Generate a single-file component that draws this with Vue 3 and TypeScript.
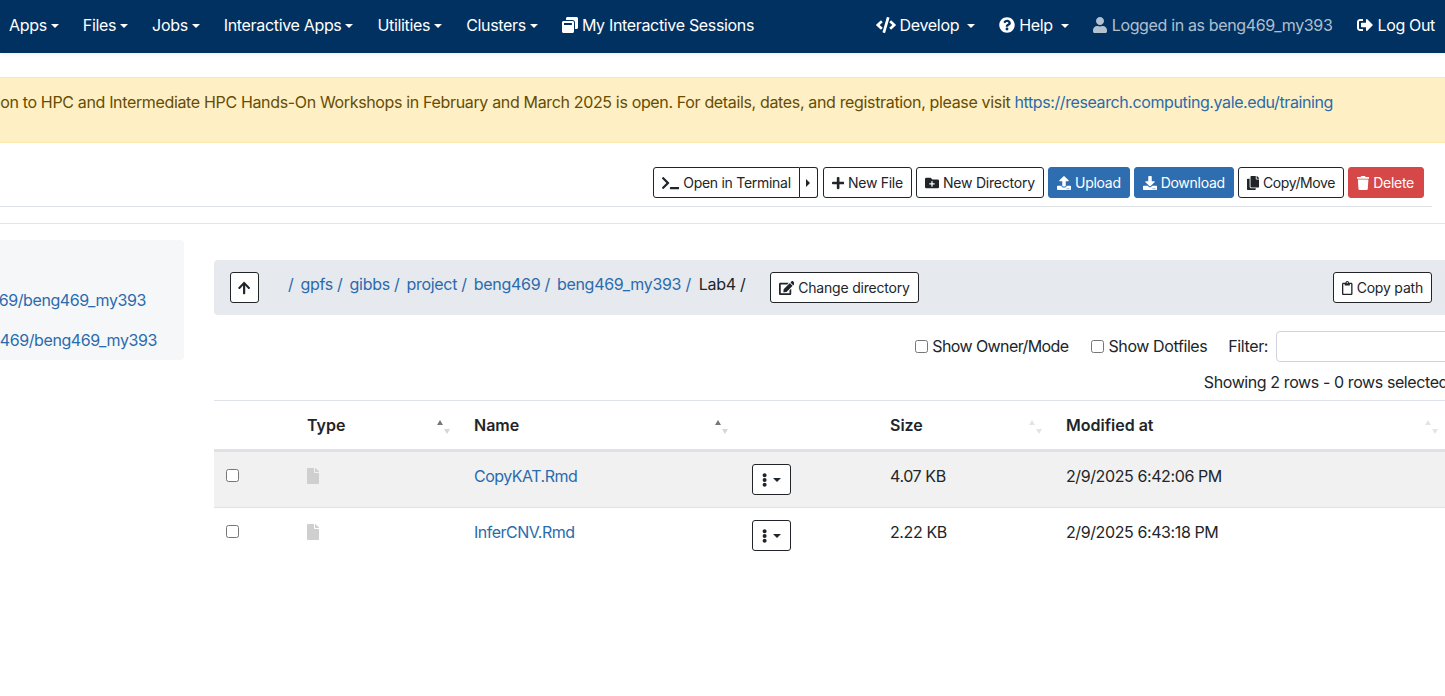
<script setup lang="ts">
import { h } from 'vue'

// font awesome 5 solid paths: [viewBox width, d]
const icons: Record<string, [number, string]> = {
  file: [384, 'M224 136V0H24C10.7 0 0 10.7 0 24v464c0 13.3 10.7 24 24 24h336c13.3 0 24-10.7 24-24V160H248c-13.2 0-24-10.8-24-24zm160-14.1v6.1H256V0h6.1c6.4 0 12.5 2.5 17 7l97.9 98c4.5 4.5 7 10.6 7 16.9z'],
  up: [448, 'M34.9 289.5l-22.2-22.2c-9.4-9.4-9.4-24.6 0-33.9L207 39c9.4-9.4 24.6-9.4 33.9 0l194.3 194.3c9.4 9.4 9.4 24.6 0 33.9L413 289.4c-9.5 9.5-25 9.3-34.3-.4L264 168.6V456c0 13.3-10.7 24-24 24h-32c-13.3 0-24-10.7-24-24V168.6L69.2 289.1c-9.3 9.8-24.8 10-34.3.4z'],
  plus: [448, 'M416 208H272V64c0-17.67-14.33-32-32-32h-32c-17.67 0-32 14.33-32 32v144H32c-17.67 0-32 14.33-32 32v32c0 17.67 14.33 32 32 32h144v144c0 17.67 14.33 32 32 32h32c17.67 0 32-14.33 32-32V304h144c17.67 0 32-14.33 32-32v-32c0-17.67-14.33-32-32-32z'],
  terminal: [640, 'M257.981 272.971L63.638 467.314c-9.373 9.373-24.569 9.373-33.941 0L7.029 444.647c-9.357-9.357-9.375-24.522-.04-33.901L161.011 256 6.99 101.255c-9.335-9.379-9.317-24.544.04-33.901l22.667-22.667c9.373-9.373 24.569-9.373 33.941 0L257.981 239.03c9.373 9.372 9.373 24.568 0 33.941zM640 456v-32c0-13.255-10.745-24-24-24H312c-13.255 0-24 10.745-24 24v32c0 13.255 10.745 24 24 24h304c13.255 0 24-10.745 24-24z'],
  folderPlus: [512, 'M464,128H272L208,64H48A48,48,0,0,0,0,112V400a48,48,0,0,0,48,48H464a48,48,0,0,0,48-48V176A48,48,0,0,0,464,128ZM359.5,296a16,16,0,0,1-16,16h-64v64a16,16,0,0,1-16,16h-16a16,16,0,0,1-16-16V312h-64a16,16,0,0,1-16-16V280a16,16,0,0,1,16-16h64V200a16,16,0,0,1,16-16h16a16,16,0,0,1,16,16v64h64a16,16,0,0,1,16,16Z'],
  upload: [512, 'M296 384h-80c-13.3 0-24-10.7-24-24V192h-87.7c-17.8 0-26.7-21.5-14.1-34.1L242.3 5.7c7.5-7.5 19.8-7.5 27.3 0l152.2 152.2c12.6 12.6 3.7 34.1-14.1 34.1H320v168c0 13.3-10.7 24-24 24zm216-8v112c0 13.3-10.7 24-24 24H24c-13.3 0-24-10.7-24-24V376c0-13.3 10.7-24 24-24h136v8c0 30.9 25.1 56 56 56h80c30.9 0 56-25.1 56-56v-8h136c13.3 0 24 10.7 24 24zm-124 88c0-11-9-20-20-20s-20 9-20 20 9 20 20 20 20-9 20-20zm64 0c0-11-9-20-20-20s-20 9-20 20 9 20 20 20 20-9 20-20z'],
  download: [512, 'M216 0h80c13.3 0 24 10.7 24 24v168h87.7c17.8 0 26.7 21.5 14.1 34.1L269.7 378.3c-7.5 7.5-19.8 7.5-27.3 0L90.1 226.1c-12.6-12.6-3.7-34.1 14.1-34.1H192V24c0-13.3 10.7-24 24-24zm296 376v112c0 13.3-10.7 24-24 24H24c-13.3 0-24-10.7-24-24V376c0-13.3 10.7-24 24-24h146.7l49 49c20.1 20.1 52.5 20.1 72.6 0l49-49H488c13.3 0 24 10.7 24 24zm-124 88c0-11-9-20-20-20s-20 9-20 20 9 20 20 20 20-9 20-20zm64 0c0-11-9-20-20-20s-20 9-20 20 9 20 20 20 20-9 20-20z'],
  copy: [448, 'M320 448v40c0 13.255-10.745 24-24 24H24c-13.255 0-24-10.745-24-24V120c0-13.255 10.745-24 24-24h72v296c0 30.879 25.121 56 56 56h168zm0-344V0H152c-13.255 0-24 10.745-24 24v368c0 13.255 10.745 24 24 24h272c13.255 0 24-10.745 24-24V128H344c-13.2 0-24-10.8-24-24zm120.971-31.029L375.029 7.029A24 24 0 0 0 358.059 0H352v96h96v-6.059a24 24 0 0 0-7.029-16.97z'],
  trash: [448, 'M432 32H312l-9.4-18.7A24 24 0 0 0 281.1 0H166.8a23.72 23.72 0 0 0-21.4 13.3L136 32H16A16 16 0 0 0 0 48v32a16 16 0 0 0 16 16h416a16 16 0 0 0 16-16V48a16 16 0 0 0-16-16zM53.2 467a48 48 0 0 0 47.9 45h245.8a48 48 0 0 0 47.9-45L416 128H32z'],
  edit: [576, 'M402.6 83.2l90.2 90.2c3.8 3.8 3.8 10 0 13.8L274.4 405.6l-92.8 10.3c-12.4 1.4-22.9-9.1-21.5-21.5l10.3-92.8L388.8 83.2c3.8-3.8 10-3.8 13.8 0zm162-22.9l-48.8-48.8c-15.2-15.2-39.9-15.2-55.2 0l-35.4 35.4c-3.8 3.8-3.8 10 0 13.8l90.2 90.2c3.8 3.8 10 3.8 13.8 0l35.4-35.4c15.2-15.3 15.2-40 0-55.2zM384 346.2V448H64V128h229.8c3.2 0 6.2-1.3 8.5-3.5l40-40c7.6-7.6 2.2-20.5-8.5-20.5H48C21.5 64 0 85.5 0 112v352c0 26.5 21.5 48 48 48h352c26.5 0 48-21.5 48-48V306.2c0-10.7-12.9-16-20.5-8.5l-40 40c-2.2 2.3-3.5 5.3-3.5 8.5z'],
  clipboard: [384, 'M336 64h-80c0-35.3-28.7-64-64-64s-64 28.7-64 64H48C21.5 64 0 85.5 0 112v352c0 26.5 21.5 48 48 48h288c26.5 0 48-21.5 48-48V112c0-26.5-21.5-48-48-48zM192 40c13.3 0 24 10.7 24 24s-10.7 24-24 24-24-10.7-24-24 10.7-24 24-24zm144 418c0 3.3-2.7 6-6 6H54c-3.3 0-6-2.7-6-6V118c0-3.3 2.7-6 6-6h42v36c0 6.6 5.4 12 12 12h168c6.6 0 12-5.4 12-12v-36h42c3.3 0 6 2.7 6 6z'],
  dots: [192, 'M96 184c39.8 0 72 32.2 72 72s-32.2 72-72 72-72-32.2-72-72 32.2-72 72-72zM24 80c0 39.8 32.2 72 72 72s72-32.2 72-72S135.8 8 96 8 24 40.2 24 80zm0 352c0 39.8 32.2 72 72 72s72-32.2 72-72-32.2-72-72-72-72 32.2-72 72z'],
  code: [640, 'M278.9 511.5l-61-17.7c-6.4-1.8-10-8.5-8.2-14.9L346.2 8.7c1.8-6.4 8.5-10 14.9-8.2l61 17.7c6.4 1.8 10 8.5 8.2 14.9L293.8 503.3c-1.9 6.4-8.5 10.1-14.9 8.2zm-114-112.2l43.5-46.4c4.6-4.9 4.3-12.7-.8-17.2L117 256l90.6-79.7c5.1-4.5 5.5-12.3.8-17.2l-43.5-46.4c-4.5-4.8-12.1-5.1-17-.5L3.8 247.2c-5.1 4.7-5.1 12.8 0 17.5l144.1 135.1c4.9 4.6 12.5 4.4 17-.5zm327.2.6l144.1-135.1c5.1-4.7 5.1-12.8 0-17.5L492.1 112.1c-4.8-4.5-12.4-4.3-17 .5L431.6 159c-4.6 4.9-4.3 12.7.8 17.2L523 256l-90.6 79.7c-5.1 4.5-5.5 12.3-.8 17.2l43.5 46.4c4.5 4.9 12.1 5.1 17 .6z'],
  help: [512, 'M504 256c0 136.997-111.043 248-248 248S8 392.997 8 256C8 119.083 119.043 8 256 8s248 111.083 248 248zM262.655 90c-54.497 0-89.255 22.957-116.549 63.758-3.536 5.286-2.353 12.415 2.715 16.258l34.699 26.31c5.205 3.947 12.621 3.008 16.665-2.122 17.864-22.658 30.113-35.797 57.303-35.797 20.429 0 45.698 13.148 45.698 32.958 0 14.976-12.363 22.667-32.534 33.976C247.128 238.528 216 254.941 216 296v4c0 6.627 5.373 12 12 12h56c6.627 0 12-5.373 12-12v-1.333c0-28.462 83.186-29.647 83.186-106.667 0-58.002-60.165-102-116.531-102zM256 338c-25.365 0-46 20.635-46 46 0 25.364 20.635 46 46 46s46-20.636 46-46c0-25.365-20.635-46-46-46z'],
  user: [448, 'M224 256c70.7 0 128-57.3 128-128S294.7 0 224 0 96 57.3 96 128s57.3 128 128 128zm89.6 32h-16.7c-22.2 10.2-46.9 16-72.9 16s-50.6-5.8-72.9-16h-16.7C60.2 288 0 348.2 0 422.4V464c0 26.5 21.5 48 48 48h352c26.5 0 48-21.5 48-48v-41.6c0-74.2-60.2-134.4-134.4-134.4z'],
  logout: [512, 'M497 273L329 441c-15 15-41 4.5-41-17v-96H152c-13.3 0-24-10.7-24-24v-96c0-13.3 10.7-24 24-24h136V88c0-21.4 25.9-32 41-17l168 168c9.3 9.4 9.3 24.6 0 34zM192 436v-40c0-6.6-5.4-12-12-12H96c-17.7 0-32-14.3-32-32V160c0-17.7 14.3-32 32-32h84c6.6 0 12-5.4 12-12V76c0-6.6-5.4-12-12-12H96c-53 0-96 43-96 96v192c0 53 43 96 96 96h84c6.6 0 12-5.4 12-12z'],
  sessions: [512, 'M512 48v288c0 26.5-21.5 48-48 48h-48V176c0-44.1-35.9-80-80-80H128V48c0-26.5 21.5-48 48-48h288c26.5 0 48 21.5 48 48zM384 176v288c0 26.5-21.5 48-48 48H48c-26.5 0-48-21.5-48-48V176c0-26.5 21.5-48 48-48h288c26.5 0 48 21.5 48 48zm-68 28c0-6.6-5.4-12-12-12H76c-6.6 0-12 5.4-12 12v52h252v-52z'],
}

const Fa = (props: { n: string }) =>
  h('svg', { viewBox: `0 0 ${icons[props.n][0]} 512`, class: 'fa', fill: 'currentColor' }, [
    h('path', { d: icons[props.n][1] }),
  ])
Fa.props = ['n']

const navItems = ['Apps', 'Files', 'Jobs', 'Interactive Apps', 'Utilities', 'Clusters']
const crumbs = ['gpfs', 'gibbs', 'project', 'beng469', 'beng469_my393']
const actions = [
  { label: 'New File', icon: 'plus', kind: 'outline' },
  { label: 'New Directory', icon: 'folderPlus', kind: 'outline loose' },
  { label: 'Upload', icon: 'upload', kind: 'blue' },
  { label: 'Download', icon: 'download', kind: 'blue' },
  { label: 'Copy/Move', icon: 'copy', kind: 'outline narrow' },
  { label: 'Delete', icon: 'trash', kind: 'red' },
]
const columns = ['', 'Type', 'Name', '', 'Size', 'Modified at']
const rows = [
  { name: 'CopyKAT.Rmd', size: '4.07 KB', date: '2/9/2025 6:42:06 PM' },
  { name: 'InferCNV.Rmd', size: '2.22 KB', date: '2/9/2025 6:43:18 PM' },
]
</script>

<template>
  <div class="page">
    <nav class="navbar">
      <a v-for="item in navItems" :key="item" class="nav-link">{{ item }}<i class="caret" /></a>
      <a class="nav-link"><Fa n="sessions" class="ico-nav" />My Interactive Sessions</a>
      <div class="nav-right">
        <a class="nav-link"><Fa n="code" class="ico-nav" />Develop<i class="caret wide" /></a>
        <a class="nav-link"><Fa n="help" class="ico-nav" />Help<i class="caret wide" /></a>
        <span class="nav-link muted"><Fa n="user" class="ico-nav ico-user" />Logged in as beng469_my393</span>
        <a class="nav-link"><Fa n="logout" class="ico-nav" />Log Out</a>
      </div>
    </nav>

    <div class="alert">
      <p>Registration for the Introduction to HPC and Intermediate HPC Hands-On Workshops in February and March 2025 is open. For details, dates, and registration, please visit <a>https://research.computing.yale.edu/training</a></p>
    </div>

    <div class="toolbar">
      <div class="split">
        <button class="btn split-main"><Fa n="terminal" class="ico-btn" />Open in Terminal</button>
        <button class="btn split-caret"><i class="caret-right" /></button>
      </div>
      <button v-for="a in actions" :key="a.label" class="btn" :class="a.kind">
        <Fa :n="a.icon" class="ico-btn" />{{ a.label }}
      </button>
    </div>
    <div class="rule-top" />
    <div class="rule-bottom" />

    <div class="content">
      <aside class="sidebar">
        <div class="fav-row" />
        <a class="fav-row">/gpfs/gibbs/project/beng469/beng469_my393</a>
        <a class="fav-row second">/vast/palmer/scratch/beng469/beng469_my393</a>
      </aside>

      <main class="main">
        <div class="crumbbar">
          <button class="btn up"><Fa n="up" class="ico-up" /></button>
          <ol class="crumbs">
            <li><a>/</a></li>
            <li v-for="c in crumbs" :key="c"><a>{{ c }}</a> <a>/</a></li>
            <li class="current">Lab4 /</li>
          </ol>
          <button class="btn change"><Fa n="edit" class="ico-btn" />Change directory</button>
          <button class="btn copy-path"><Fa n="clipboard" class="ico-btn" />Copy path</button>
        </div>

        <div class="filters">
          <label class="tight"><input type="checkbox" />Show Owner/Mode</label>
          <label><input type="checkbox" />Show Dotfiles</label>
          <label class="filter-label">Filter:<input type="text" class="filter-input" /></label>
        </div>
        <div class="count">Showing 2 rows - 0 rows selected</div>

        <table class="files">
          <colgroup>
            <col class="c-check" /><col class="c-type" /><col class="c-name" />
            <col class="c-act" /><col class="c-size" /><col class="c-date" />
          </colgroup>
          <thead>
            <tr>
              <th v-for="(col, i) in columns" :key="i">
                {{ col }}
                <span v-if="col" class="sort" :class="{ active: i < 3 }"><i class="s-up" /><i class="s-down" /></span>
              </th>
            </tr>
          </thead>
          <tbody>
            <tr v-for="(r, i) in rows" :key="r.name" :class="{ odd: i === 0 }">
              <td class="check"><input type="checkbox" /></td>
              <td class="type"><Fa n="file" class="ico-file" /></td>
              <td><a class="file-link">{{ r.name }}</a></td>
              <td><button class="btn menu"><Fa n="dots" class="ico-dots" /><i class="caret dark" /></button></td>
              <td>{{ r.size }}</td>
              <td>{{ r.date }}</td>
            </tr>
          </tbody>
        </table>
      </main>
    </div>
  </div>
</template>

<style>
html, body {
  margin: 0;
  overflow: hidden;
  background: #fff;
}
</style>

<style scoped>
.page {
  width: 1445px;
  height: 696px;
  overflow: hidden;
  font-family: Inter, "Liberation Sans", sans-serif;
  font-size: 16px;
  line-height: 24px;
  letter-spacing: -0.4px;
  color: #212529;
}
a {
  color: #2a6bad;
}
.fa {
  display: inline-block;
  height: 1em;
  flex: none;
}

/* navbar */
.navbar {
  display: flex;
  align-items: center;
  gap: 24px;
  height: 53px;
  padding: 0 10px 4px 9px;
  box-sizing: border-box;
  background: #003161;
  box-shadow: 0 1px 4px rgba(0, 0, 0, 0.08);
  letter-spacing: -0.33px;
}
.nav-right {
  display: flex;
  align-items: center;
  gap: 24px;
  margin-left: auto;
}
.nav-link {
  color: #fff;
  white-space: nowrap;
}
.muted {
  color: rgba(255, 255, 255, 0.7);
  letter-spacing: -0.35px;
  margin-right: 1px;
}
.caret {
  display: inline-block;
  margin-left: 4px;
  vertical-align: 3px;
  border-top: 4.8px solid currentColor;
  border-left: 4.8px solid transparent;
  border-right: 4.8px solid transparent;
}
.caret.wide {
  margin-left: 8px;
}
.caret.dark {
  margin-left: 6px;
  color: #212529;
  vertical-align: 2px;
}
.ico-nav {
  height: 16px;
  margin-right: 4px;
  vertical-align: -2px;
}
.ico-user {
  margin-right: 5px;
}

/* announcement */
.alert {
  margin-top: 24px;
  height: 66px;
  box-sizing: border-box;
  padding: 12px 112px 12px 0;
  display: flex;
  justify-content: flex-end;
  background: #fef0c4;
  border-top: 1px solid #fbe8ae;
  border-bottom: 1px solid #fbe8ae;
  color: #664d03;
  letter-spacing: -0.345px;
  overflow: hidden;
}
.alert p {
  margin: 0;
  flex: none;
  white-space: nowrap;
}
.alert a {
  letter-spacing: -0.4px;
}

/* buttons */
.btn {
  display: inline-flex;
  align-items: center;
  height: 31px;
  box-sizing: border-box;
  padding: 0 8px;
  border: 1px solid #212529;
  border-radius: 3px;
  background: #fff;
  color: #212529;
  font: inherit;
  font-size: 14px;
  letter-spacing: -0.28px;
  white-space: nowrap;
}
.btn.blue {
  background: #2e6eb0;
  border-color: #2e6eb0;
  color: #fff;
}
.btn.red {
  padding: 0 9px 0 8px;
  background: #d64848;
  border-color: #d64848;
  color: #fff;
}
.btn.loose {
  letter-spacing: -0.2px;
}
.btn.narrow {
  letter-spacing: -0.4px;
}
.ico-btn {
  height: 14px;
  margin-right: 4px;
}
.toolbar {
  display: flex;
  justify-content: flex-end;
  gap: 4px;
  margin-top: 24px;
  padding-right: 21px;
}
.split {
  display: flex;
  margin-right: 1px;
}
.split-main {
  border-radius: 3px 0 0 3px;
}
.split-caret {
  width: 18px;
  padding: 0;
  justify-content: center;
  border-left: 0;
  border-radius: 0 3px 3px 0;
}
.caret-right {
  border-left: 4.5px solid #212529;
  border-top: 4.5px solid transparent;
  border-bottom: 4.5px solid transparent;
}
.rule-top {
  margin: 8px 13px 0 0;
  border-top: 1px solid #dee2e6;
}
.rule-bottom {
  margin-top: 16px;
  border-top: 1px solid #e5e5e5;
}

/* content */
.content {
  display: flex;
  align-items: flex-start;
  gap: 30px;
  margin-top: 16px;
}
.sidebar {
  flex: none;
  width: 184px;
  height: 120px;
  display: flex;
  flex-direction: column;
  overflow: hidden;
  background: #f6f7f9;
  border-radius: 0 4px 4px 0;
}
.fav-row {
  display: flex;
  justify-content: flex-end;
  height: 40px;
  flex: none;
  line-height: 40px;
  padding-right: 38px;
  white-space: nowrap;
}
.fav-row.second {
  padding-right: 27px;
}
.main {
  flex: 1;
  min-width: 0;
  margin-top: 20px;
}
.crumbbar {
  display: flex;
  align-items: center;
  height: 55px;
  padding: 0 13px 0 16px;
  box-sizing: border-box;
  background: #e6e9ee;
  border-radius: 4px 0 0 4px;
}
.crumbbar .btn {
  letter-spacing: -0.2px;
}
.up {
  width: 29px;
  padding: 0;
  justify-content: center;
}
.ico-up {
  height: 14px;
}
.crumbs {
  display: flex;
  gap: 7px;
  margin: -8px 0 0 29px;
  padding: 0;
  list-style: none;
  letter-spacing: -0.3px;
}
.crumbs li {
  white-space: pre;
}
.current {
  color: #212529;
  margin-left: 1px;
}
.change {
  margin-left: 24px;
}
.copy-path {
  margin-left: auto;
}
.filters {
  display: flex;
  justify-content: flex-end;
  align-items: center;
  gap: 21px;
  height: 31px;
  margin: 16px -60px 0 0;
}
.filters label {
  display: flex;
  align-items: center;
  padding-bottom: 1px;
  white-space: nowrap;
}
.filters .tight {
  letter-spacing: -0.6px;
  margin-right: 2px;
}
.filters input[type='checkbox'] {
  margin: 0 4px 0 0;
}
.filter-input {
  width: 229px;
  height: 31px;
  margin: 0 0 -1px 8px;
  box-sizing: border-box;
  border: 1px solid #ced4da;
  border-radius: 4px;
  background: #fff;
}
.count {
  margin: 8px -3px 0 0;
  text-align: right;
  white-space: nowrap;
}

/* table */
.files {
  width: 1231px;
  margin-top: 6px;
  border-collapse: collapse;
  table-layout: fixed;
}
.c-check { width: 76px; }
.c-type { width: 167px; }
.c-name { width: 278px; }
.c-act { width: 138px; }
.c-size { width: 176px; }
.c-date { width: 396px; }
th {
  position: relative;
  height: 50px;
  padding: 0 17px;
  box-sizing: border-box;
  text-align: left;
  font-weight: 600;
  letter-spacing: 0;
  border-top: 1px solid #dee2e6;
  border-bottom: 3px solid #dee2e6;
}
td {
  height: 57px;
  padding: 12px 17px 0;
  box-sizing: border-box;
  border-bottom: 1px solid #dee2e6;
  vertical-align: top;
}
tbody tr:last-child td {
  border-bottom: 0;
}
.odd td {
  background: #f1f1f1;
}
td.check {
  padding: 17px 12px 0;
}
td.check input {
  display: block;
  margin: 0;
}
td.type {
  padding-top: 16px;
}
.file-link {
  letter-spacing: -0.5px;
}
.ico-file {
  display: block;
  height: 16px;
  color: #cfcfcf;
}
.menu {
  width: 39px;
  padding: 0;
  justify-content: center;
}
.ico-dots {
  height: 14px;
}
.sort {
  position: absolute;
  right: 7px;
  top: 19px;
  width: 13px;
  height: 14px;
}
.sort i {
  position: absolute;
  width: 0;
  height: 0;
  border-left: 3px solid transparent;
  border-right: 3px solid transparent;
}
.s-up {
  left: 0;
  top: 0;
  border-bottom: 5px solid #e4e4e4;
}
.s-down {
  right: 0;
  top: 9px;
  border-top: 5px solid #e4e4e4;
}
.sort.active .s-up {
  border-bottom-color: #777;
}
.sort.active .s-down {
  border-top-color: #d6d6d6;
}
</style>
